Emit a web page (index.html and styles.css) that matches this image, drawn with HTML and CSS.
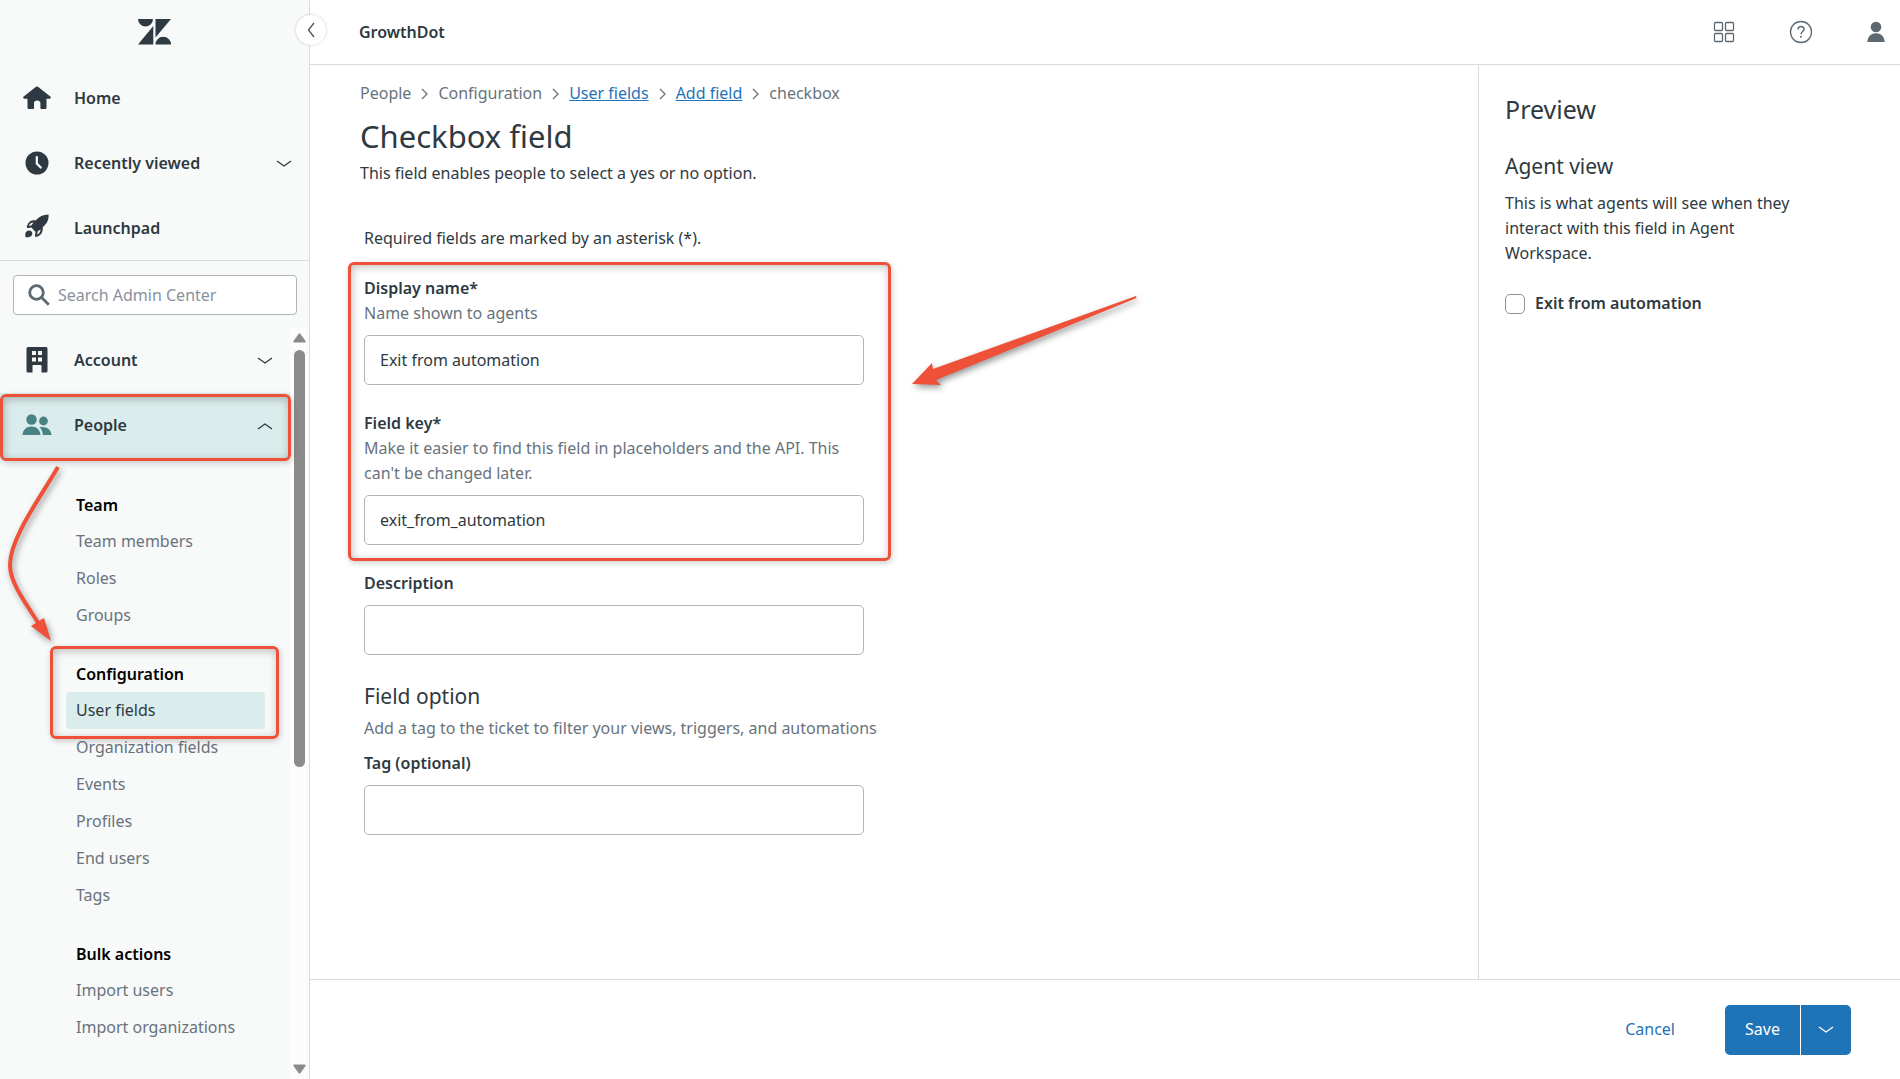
FILE: index.html
```html
<!DOCTYPE html>
<html lang="en">
<head>
<meta charset="utf-8">
<title>Checkbox field - Admin Center</title>
<link rel="stylesheet" href="styles.css">
</head>
<body>
<div class="app">
  <aside class="sidebar">
    <div class="brand">
      <svg width="33" height="26" viewBox="0 0 33 26" fill="#2f3941" role="img" aria-label="Zendesk">
        <path d="M0 0h15a7.500 7.500 0 0 1-15 0zM15.300 7v18.500H0zM17.500 0H33L17.500 18.500zM17.500 25.500a7.700 7.700 0 0 1 15.500 0z"/>
      </svg>
    </div>
    <button class="collapse" type="button" aria-label="Collapse navigation">
      <svg width="8" height="16" viewBox="0 0 8 16" fill="none" stroke="#49545c" stroke-width="1.300"><path d="M7 1L1.500 8L7 15"/></svg>
    </button>
    <nav class="primary">
      <a class="nav-item" href="#">
        <span class="nav-icon"><svg width="28" height="24" viewBox="0 0 28 24" fill="#2f3941"><path d="M14 .5c.6 0 .9.200 1.300.5l12 9.500c1 .9.500 2.200-.7 2.200H23.500v8.800c0 1-.6 1.500-1.500 1.500h-3.800c-.5 0-.8-.3-.8-.8v-5.200c0-1.500-1.400-2.500-3.200-2.500s-3.200 1-3.200 2.500v5.200c0 .5-.3.8-.8.8H6c-1 0-1.500-.5-1.500-1.500v-8.800H1.400c-1.200 0-1.700-1.300-.7-2.200l12-9.500c.4-.3.700-.5 1.300-.5z"/></svg></span>
        <span>Home</span>
      </a>
      <a class="nav-item" href="#">
        <span class="nav-icon"><svg width="24" height="24" viewBox="0 0 24 24"><circle cx="12" cy="12" r="11.500" fill="#2f3941"/><path d="M11.800 6v6.500l4 4" fill="none" stroke="#fff" stroke-width="2.200" stroke-linecap="round"/></svg></span>
        <span>Recently viewed</span>
        <svg class="chev" width="16" height="8" viewBox="0 0 16 8"><path d="M1 1l7 5 7-5"/></svg>
      </a>
      <a class="nav-item" href="#">
        <span class="nav-icon"><svg width="24" height="28" viewBox="0 0 24 28" fill="#2f3941"><path d="M23.500.5c.5 5-1.500 9-5 12l-.8.700c.5 4-1.200 8-5.700 9.500-1.700.5-2.400-.2-2-1.800l.6-3-4.200-4.400-2.700.4c-1.500.2-2.300-.5-1.700-2C3.500 7.500 7 5.800 10.500 6.500 14 2.500 18 .5 23.500.5z"/><path d="M8.500 8.500C6 8.500 4.500 9.800 3.800 11.700l2.400-.2zM15.500 15.500c0 2.500-1 4-3.300 5l.5-3.300z" fill="#f8f9f9"/><path d="M1.500 17.500C3.500 15.700 7 16.500 7.300 19c.3 2.300-1.500 4-3.800 4.200-1.800.3-2.700.1-2.900-.2-.7-1.500-.3-4.500.9-5.500z"/></svg></span>
        <span>Launchpad</span>
      </a>
    </nav>
    <div class="search-wrap">
      <label class="search">
        <svg width="22" height="22" viewBox="0 0 22 22" fill="none" stroke="#5c6970" stroke-width="2.800"><circle cx="8.500" cy="8.500" r="6.800"/><path d="M13.300 13.300l7.500 7.500"/></svg>
        <input type="search" placeholder="Search Admin Center" aria-label="Search Admin Center">
      </label>
    </div>
    <div class="scroller">
      <nav class="menu">
        <a class="nav-item" href="#">
          <span class="nav-icon"><svg width="22" height="26" viewBox="0 0 22 26"><path fill="#2f3941" fill-rule="evenodd" d="M2 0h18a1.500 1.500 0 0 1 1.500 1.500V24a1.500 1.500 0 0 1-1.500 1.500h-4.500V19c0-.6-.4-1-1-1h-7c-.6 0-1 .4-1 1v6.500H2A1.500 1.500 0 0 1 .5 24V1.500A1.500 1.500 0 0 1 2 0zM6 4v4h4V4zM12 4v4h4V4zM6 10.500v4h4v-4zM12 10.500v4h4v-4z"/></svg></span>
          <span>Account</span>
          <svg class="chev" width="16" height="8" viewBox="0 0 16 8"><path d="M1 1l7 5 7-5"/></svg>
        </a>
        <a class="nav-item current" href="#">
          <span class="nav-icon"><svg width="30" height="22" viewBox="0 0 30 22" fill="#498283"><circle cx="9.500" cy="5.500" r="5.200"/><circle cx="21.500" cy="7" r="4.400"/><path d="M.5 21C1 15.500 4.500 12.500 9.500 12.500s8.500 3 9 8.500zM19 13c6.500-.5 10 3 10.500 8H20.800c-.1-3-1-5.500-3.200-7.500z"/></svg></span>
          <span>People</span>
          <svg class="chev" width="16" height="8" viewBox="0 0 16 8"><path d="M1 7l7-5 7 5"/></svg>
        </a>
        <div class="groups">
          <section>
            <h2>Team</h2>
            <a class="sub" href="#">Team members</a>
            <a class="sub" href="#">Roles</a>
            <a class="sub" href="#">Groups</a>
          </section>
          <section>
            <div class="marked">
              <h2>Configuration</h2>
              <a class="sub active" href="#">User fields</a>
            </div>
            <a class="sub" href="#">Organization fields</a>
            <a class="sub" href="#">Events</a>
            <a class="sub" href="#">Profiles</a>
            <a class="sub" href="#">End users</a>
            <a class="sub" href="#">Tags</a>
          </section>
          <section>
            <h2>Bulk actions</h2>
            <a class="sub" href="#">Import users</a>
            <a class="sub" href="#">Import organizations</a>
          </section>
        </div>
      </nav>
      <div class="scrollbar" aria-hidden="true">
        <svg width="13" height="10" viewBox="0 0 13 10" fill="#8b8b8b"><path d="M5.500 1q1-1.300 2 0l5 7q.6 1.500-1 1.500H1.500q-1.600 0-1-1.500z"/></svg>
        <div class="track"><div class="thumb"></div></div>
        <svg width="13" height="10" viewBox="0 0 13 10" fill="#8b8b8b"><path d="M5.500 9q1 1.300 2 0l5-7q.6-1.500-1-1.500H1.500q-1.600 0-1 1.500z"/></svg>
      </div>
    </div>
    <svg class="arrow arrow-menu" width="70" height="200" viewBox="0 0 70 200" aria-hidden="true">
      <path d="M58 17C40 48 10 88 10 115C10 132 24 151 39 174" fill="none" stroke="#ee5138" stroke-width="4"/>
      <path d="M51 191L31 176L44 168z" fill="#ee5138"/>
    </svg>
  </aside>

  <div class="page">
    <header class="topbar">
      <strong>GrowthDot</strong>
      <div class="tools">
        <button type="button" aria-label="Products"><svg width="22" height="22" viewBox="0 0 22 22" fill="none" stroke="#5c6970" stroke-width="1.300"><rect x="1.500" y="1.500" width="8" height="8" rx="1"/><rect x="12.500" y="1.500" width="8" height="8" rx="1"/><rect x="1.500" y="12.500" width="8" height="8" rx="1"/><rect x="12.500" y="12.500" width="8" height="8" rx="1"/></svg></button>
        <button type="button" aria-label="Help"><svg width="24" height="24" viewBox="0 0 24 24" fill="none" stroke="#5c6970" stroke-width="1.300"><circle cx="12" cy="12" r="10.500"/><path d="M9 9.500C9 7.500 10.200 6.500 12 6.500s3 1 3 2.800c0 2.200-3 2.300-3 5" stroke-width="1.500"/><circle cx="12" cy="16.800" r="1" fill="#5c6970" stroke="none"/></svg></button>
        <button type="button" aria-label="Profile"><svg width="18" height="22" viewBox="0 0 18 22" fill="#5c6970"><circle cx="9" cy="6" r="5.300"/><path d="M.3 21C.8 15.500 4 12.300 9 12.300s8.200 3.200 8.700 8.700z"/></svg></button>
      </div>
    </header>

    <div class="columns">
      <main class="content">
        <nav class="crumbs" aria-label="Breadcrumb">
          <span>People</span>
          <svg width="7" height="12" viewBox="0 0 7 12"><path d="M1 1l5 5-5 5"/></svg>
          <span>Configuration</span>
          <svg width="7" height="12" viewBox="0 0 7 12"><path d="M1 1l5 5-5 5"/></svg>
          <a href="#">User fields</a>
          <svg width="7" height="12" viewBox="0 0 7 12"><path d="M1 1l5 5-5 5"/></svg>
          <a href="#">Add field</a>
          <svg width="7" height="12" viewBox="0 0 7 12"><path d="M1 1l5 5-5 5"/></svg>
          <span>checkbox</span>
        </nav>
        <h1>Checkbox field</h1>
        <p class="lead">This field enables people to select a yes or no option.</p>

        <form class="form">
          <p>Required fields are marked by an asterisk (*).</p>
          <div class="marked-fields">
            <div class="field">
              <label for="display-name">Display name*</label>
              <p class="hint">Name shown to agents</p>
              <input id="display-name" type="text" value="Exit from automation">
            </div>
            <div class="field">
              <label for="field-key">Field key*</label>
              <p class="hint">Make it easier to find this field in placeholders and the API. This can't be changed later.</p>
              <input id="field-key" type="text" value="exit_from_automation">
            </div>
            <svg class="arrow arrow-form" width="240" height="110" viewBox="0 0 240 110" aria-hidden="true">
              <path d="M6 99L26 78L27 84L230 11L230.500 13L30 95L35 100z" fill="#ee5138"/>
            </svg>
          </div>
          <div class="field">
            <label for="description">Description</label>
            <input id="description" type="text">
          </div>
          <div class="options">
            <h2>Field option</h2>
            <p class="hint">Add a tag to the ticket to filter your views, triggers, and automations</p>
            <div class="field">
              <label for="tag">Tag (optional)</label>
              <input id="tag" type="text">
            </div>
          </div>
        </form>
      </main>

      <aside class="preview">
        <h2>Preview</h2>
        <h3>Agent view</h3>
        <p>This is what agents will see when they interact with this field in Agent Workspace.</p>
        <label class="check"><input type="checkbox">Exit from automation</label>
      </aside>
    </div>

    <footer class="actions">
      <button class="cancel" type="button">Cancel</button>
      <div class="split">
        <button type="button" class="save">Save</button>
        <button type="button" class="more" aria-label="More save options"><svg class="chev" width="16" height="8" viewBox="0 0 16 8"><path d="M1 1l7 5 7-5"/></svg></button>
      </div>
    </footer>
  </div>
</div>
</body>
</html>
```
FILE: styles.css
```css
*, *::before, *::after { box-sizing: border-box; }

body {
  margin: 0;
  background: #fff;
  color: #2f3941;
  font-family: "Noto Sans", "Open Sans", sans-serif;
  font-size: 16px;
  line-height: 25px;
}

h1, h2, h3, p { margin: 0; font-weight: 400; }
a { color: inherit; text-decoration: none; }
button, input { font: inherit; color: inherit; }
button { border: 0; padding: 0; background: none; cursor: pointer; }
svg { display: block; flex: none; }

.app {
  display: grid;
  grid-template-columns: 310px minmax(0, 1fr);
  min-height: 100vh;
}

/* Sidebar */
.sidebar {
  position: relative;
  display: flex;
  flex-direction: column;
  border-right: 1px solid #d8dcde;
  background: #f8f9f9;
}
.brand {
  display: flex;
  justify-content: center;
  height: 66px;
  padding-top: 19px;
}
.collapse {
  position: absolute;
  top: 15px;
  right: -17px;
  z-index: 1;
  display: flex;
  align-items: center;
  justify-content: center;
  width: 30px;
  height: 30px;
  border-radius: 50%;
  background: #fff;
  box-shadow: 0 0 3px rgba(47, 57, 65, .25);
}
.primary { box-shadow: inset 0 -1px #d8dcde; }
.nav-item {
  display: flex;
  align-items: center;
  height: 65px;
  padding-right: 17px;
  font-weight: 600;
}
.nav-icon {
  display: flex;
  justify-content: center;
  width: 74px;
  padding-bottom: 2px;
}
.chev {
  margin-left: auto;
  fill: none;
  stroke: #2f3941;
  stroke-width: 1.3;
}
.search-wrap { padding: 14px 12px 13px 13px; }
.search {
  display: flex;
  align-items: center;
  gap: 8px;
  height: 40px;
  padding: 0 14px;
  border: 1px solid #b0b5ba;
  border-radius: 4px;
  background: #fff;
}
.search input {
  flex: 1;
  min-width: 0;
  padding: 0;
  border: 0;
  outline: 0;
  background: none;
}
.search input::placeholder { color: #87929d; opacity: 1; }

.scroller { display: flex; flex: 1; }
.menu { flex: 1; }
.current { position: relative; background: #daeceb; }
.current::after,
.marked::after,
.marked-fields::after {
  content: "";
  position: absolute;
  inset: 1px -1px -3px 0;
  border: 3px solid #ee5138;
  border-radius: 6px;
  box-shadow: 1px 2px 6px rgba(0, 0, 0, .2), inset 1px 2px 8px rgba(0, 0, 0, .25);
  pointer-events: none;
}
.groups {
  display: flex;
  flex-direction: column;
  gap: 23px;
  padding: 30px 25px 20px 66px;
  color: #68737d;
}
.groups h2 {
  padding-left: 10px;
  color: #000;
  font-size: 16px;
  font-weight: 600;
  line-height: 35px;
}
.sub {
  display: block;
  padding-left: 10px;
  border-radius: 4px;
  line-height: 37px;
}
.sub.active { background: #daeceb; color: #2f3941; }
.marked { position: relative; }
.marked::after { inset: -11px -14px -10px -16px; }

.scrollbar {
  display: flex;
  flex-direction: column;
  align-items: center;
  gap: 7px;
  width: 19px;
  padding: 5px 0;
  background: #fcfcfc;
}
.track { flex: 1; }
.thumb {
  width: 11px;
  height: 59%;
  border-radius: 6px;
  background: #8b8b8b;
}

.arrow {
  position: absolute;
  filter: drop-shadow(2px 3px 3px rgba(0, 0, 0, .4));
  pointer-events: none;
}
.arrow-menu { top: 450px; left: 0; }
.arrow-form { top: 34px; left: 542px; }

/* Page */
.page { display: flex; flex-direction: column; }
.topbar {
  display: flex;
  align-items: center;
  justify-content: space-between;
  height: 65px;
  padding: 0 15px 0 49px;
  border-bottom: 1px solid #d8dcde;
}
.topbar strong { font-weight: 600; }
.tools { display: flex; align-items: center; gap: 54px; }

.columns { display: flex; flex: 1; }
.content { flex: 1; padding: 16px 50px; }
.crumbs {
  display: flex;
  align-items: center;
  gap: 10px;
  color: #68737d;
}
.crumbs a { color: #1f73b7; text-decoration: underline; }
.crumbs path { fill: none; stroke: #68737d; stroke-width: 1.3; }
h1 { padding-top: 10px; font-size: 31px; line-height: 40px; }
.lead { padding-top: 5px; }

.form { padding: 40px 0 0 4px; }
.marked-fields { position: relative; padding-top: 25px; }
.marked-fields::after { inset: 11px auto -16px -16px; width: 543px; }
.field { width: 500px; padding-bottom: 26px; }
.marked-fields .field + .field { padding-bottom: 0; }
.marked-fields + .field { padding-top: 26px; }
.field label { display: block; font-weight: 600; }
.hint { color: #68737d; }
.field input {
  display: block;
  width: 100%;
  height: 50px;
  margin-top: 9px;
  padding: 0 15px;
  border: 1px solid #b0b5ba;
  border-radius: 5px;
  background: #fff;
}
.options h2 { padding-bottom: 5px; font-size: 21px; line-height: 30px; }
.options .hint { padding-bottom: 10px; }

.preview {
  width: 422px;
  padding: 28px 90px 20px 26px;
  border-left: 1px solid #d8dcde;
}
.preview h2 { font-size: 25px; line-height: 32px; }
.preview h3 { padding: 26px 0 10px; font-size: 21px; line-height: 30px; }
.check {
  display: flex;
  align-items: center;
  gap: 10px;
  padding-top: 25px;
  font-weight: 600;
}
.check input {
  appearance: none;
  width: 20px;
  height: 20px;
  margin: 0;
  border: 1px solid #87929d;
  border-radius: 5px;
}

.actions {
  display: flex;
  align-items: center;
  justify-content: flex-end;
  gap: 50px;
  height: 100px;
  padding: 0 49px 0 0;
  border-top: 1px solid #d8dcde;
}
.cancel { color: #1f73b7; }
.split { display: flex; gap: 1px; }
.split button { height: 50px; background: #1f73b7; color: #fff; }
.save { width: 75px; border-radius: 5px 0 0 5px; }
.more { width: 50px; border-radius: 0 5px 5px 0; }
.more .chev { margin: auto; stroke: #fff; }
```
